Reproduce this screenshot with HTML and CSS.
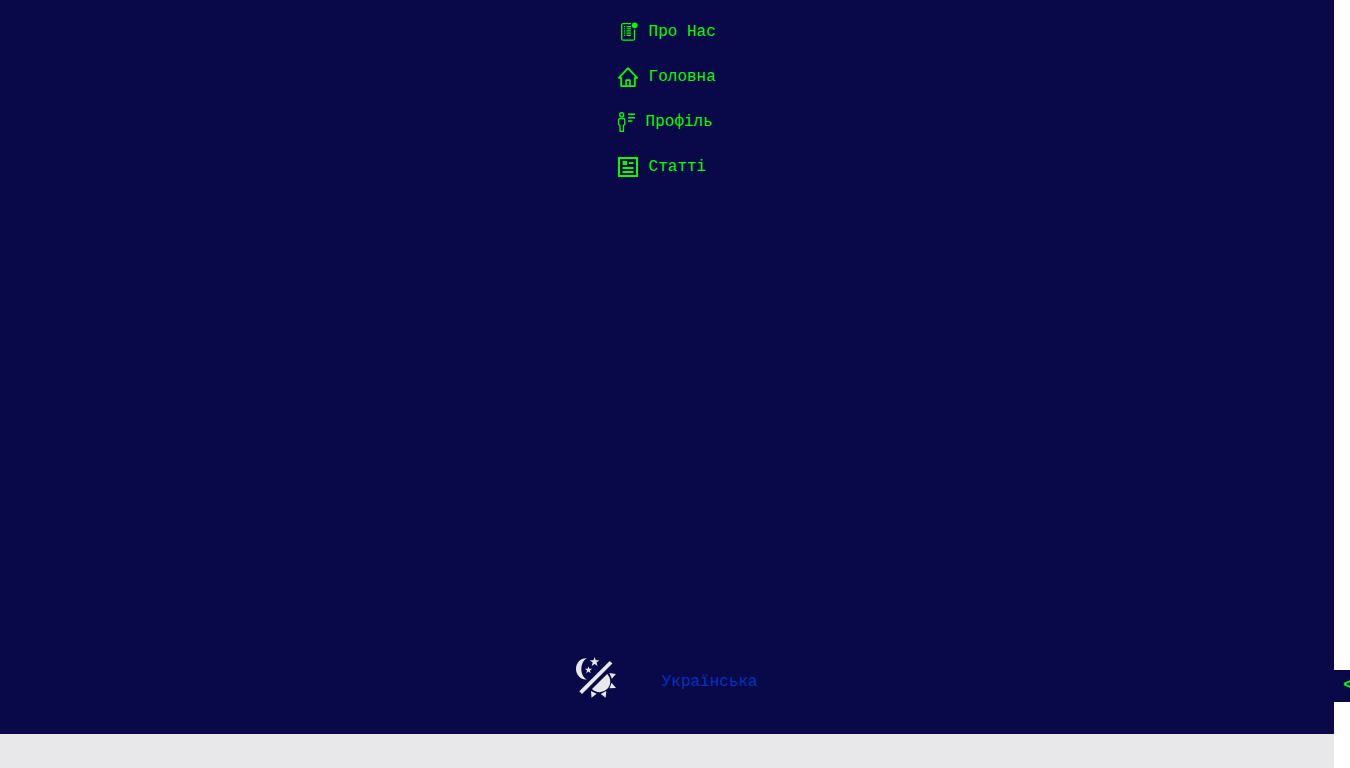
FILE: index.html
```html
<!DOCTYPE html>
<html lang="uk">
<head>
<meta charset="utf-8">
<title>Меню</title>
<link rel="stylesheet" href="styles.css">
</head>
<body>
<div class="app">
  <aside class="sidebar">
    <nav class="menu">
      <a class="item" href="#"><svg class="icon" width="20" height="20" viewBox="0 0 20 20"><path d="M13 1.600H5.200Q3.700 1.600 3.700 3V16.700Q3.700 18.200 5.200 18.200H15Q16.500 18.200 16.500 16.700V7.500" fill="none" stroke="currentColor" stroke-width="1.300"/><path d="M6 4.600h1.200m1.300 0h4.500M6 6.700h1.200m1.300 0h4.500M6 8.900h1.200m1.300 0h4.500M6 11.100h1.200m1.300 0h4.500M6 13.400h1.200m1.300 0h4.500" stroke="currentColor" stroke-width="1.100"/><circle cx="16.700" cy="3.300" r="2.900" fill="currentColor"/></svg><span>Про Нас</span></a>
      <a class="item" href="#"><svg class="icon" width="20" height="20" viewBox="0 0 20 20" fill="none" stroke="currentColor" stroke-linejoin="round"><path d="M3.200 10.800H.9L10 1.200l9.100 9.600h-2.300v8.300H3.200z" stroke-width="1.800"/><path d="M8.100 19v-5.900h3.900V19" stroke-width="1.600"/></svg><span>Головна</span></a>
      <a class="item" href="#"><svg class="icon" width="17" height="20" viewBox="0 0 17 20" fill="none" stroke="currentColor"><circle cx="3.700" cy="2.700" r="2" stroke-width="1.400"/><path d="M2.200 6.500h3Q6.800 6.500 6.800 8.300v4L5.500 13.500v5.900H2v-5.900L.6 12.300v-4Q.6 6.500 2.200 6.500z" stroke-width="1.300" stroke-linejoin="round"/><path d="M10 2.300h7M10 5.700h7M10 9.100h4.500" stroke-width="1.500"/></svg><span>Профіль</span></a>
      <a class="item" href="#"><svg class="icon" width="20" height="20" viewBox="0 0 20 20" fill="none" stroke="currentColor"><path d="M1 1h18v18H1z" stroke-width="2"/><path d="M4.600 4h4.500v4H4.600z" fill="currentColor" stroke="none"/><path d="M11 6h4.500M4.500 11h11M4.500 15h11" stroke-width="2"/></svg><span>Статті</span></a>
    </nav>
    <div class="switchers">
      <button class="theme" type="button" aria-label="Тема"><svg class="icon" width="40" height="41" viewBox="0 0 40 41" fill="currentColor"><path d="M11 1.200C5 .5 0 5.500 0 11.800S5 23.300 11 22.500C3.500 19 3.500 5 11 1.200z"/><path d="M18.600 0l1.150 3.200 3.650.1-2.900 2.150 1.050 3.450-2.950-2-2.950 2 1.050-3.450-2.900-2.150 3.650-.1zM12.500 9.200l.9 2.500 2.800.1-2.250 1.700.8 2.700-2.250-1.600-2.250 1.600.8-2.700-2.250-1.700 2.800-.1z"/><path d="M33.700 4l2.700 2.600L6 37 3.300 34.300z"/><path d="M31.200 17A10.400 10.400 0 0 1 16 32z"/><path d="M33.300 16l6.600 1-4 4.700zM35.600 25.700l4.400 5.300-6.500.3zM15 34.100l5.600 2.700-5.100 4zM30.200 34.100l-.5 6.700-5-3.900z"/></svg></button>
      <button class="lang" type="button">Українська</button>
    </div>
    <button class="collapse" type="button">&lt;</button>
  </aside>
</div>
</body>
</html>
```
FILE: styles.css
```css
body {
  margin: 0;
  overflow: hidden;
  background: #fff;
  font: 16px/20px "Liberation Mono", monospace;
}

.app {
  width: 1334px;
  height: 768px;
  background: #e8e8ea;
}

.sidebar {
  position: relative;
  display: flex;
  flex-direction: column;
  align-items: center;
  justify-content: space-between;
  box-sizing: border-box;
  height: 734px;
  padding: 22px 0 32px;
  background: #090949;
}

.menu {
  display: flex;
  flex-direction: column;
  gap: 25px;
}

.item {
  display: flex;
  align-items: center;
  gap: 10.4px;
  height: 20px;
  color: #0f0;
  text-decoration: none;
}

.icon {
  display: block;
  flex: none;
}

button {
  border: 0;
  padding: 0;
  background: none;
  font: inherit;
}

.switchers {
  display: flex;
  align-items: center;
  gap: 45.4px;
  height: 49px;
}

.theme {
  color: #e8e8ea;
}

.lang {
  padding-top: 8px;
  color: #0232c2;
}

.collapse {
  position: absolute;
  right: -32px;
  bottom: 32px;
  width: 32px;
  height: 32px;
  background: #090949;
  color: #0f0;
  font-size: 24px;
}
```
